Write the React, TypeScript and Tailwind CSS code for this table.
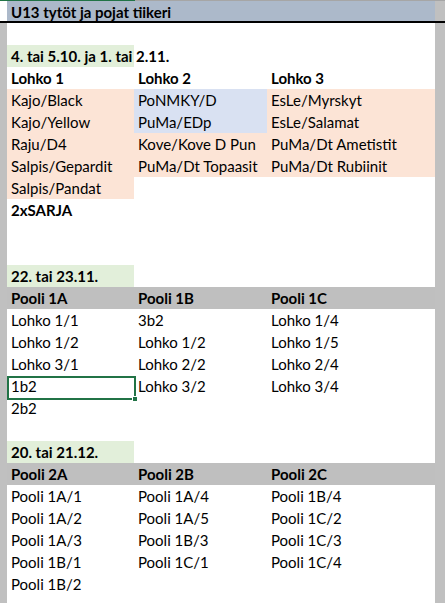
import React from "react"

type Cell = { text?: string; bold?: boolean; bg?: string; selected?: boolean }

const peach = "bg-[#fce4d6]"
const blue = "bg-[#d9e1f2]"
const green = "bg-[#e2efda]"
const gray = "bg-[#bfbfbf]"

const colW = ["w-[127px]", "w-[133px]", "w-[168px]"]

function SheetRow({ cells, rowBg }: { cells: Cell[]; rowBg?: string }) {
  return (
    <div className={`flex h-[22px] ${rowBg ?? ""}`}>
      {[0, 1, 2].map((i) => {
        const c = cells[i] ?? {}
        return (
          <div
            key={i}
            className={`relative ${colW[i]} shrink-0 h-[22px] pl-[4px] leading-[22px] whitespace-nowrap ${c.bg ?? ""} ${
              c.bold ? "font-bold" : ""
            }`}
          >
            {c.selected && (
              <>
                <div className="absolute left-0 top-[1px] w-[129px] h-[24px] border-2 border-[#217346]" />
                <div className="absolute left-[125px] top-[21px] w-[6px] h-[6px] bg-[#217346] border border-white" />
              </>
            )}
            <span className="relative">{c.text}</span>
          </div>
        )
      })}
    </div>
  )
}

const t = (text: string, bg?: string): Cell => ({ text, bg })
const b = (text: string, bg?: string): Cell => ({ text, bg, bold: true })
const empty: Cell[] = []

export default function App() {
  return (
    <div
      className="w-[445px] h-[603px] overflow-hidden bg-[#c0c0c0] text-[15px] text-black"
      style={{ fontFamily: "Lato, 'Open Sans', sans-serif" }}
    >
      <div className="flex h-px">
        <div className="w-[135px] bg-[#217346]" />
        <div className="flex-1 bg-[#a6a6a6]" />
      </div>
      <div className="flex h-[20px]">
        <div className="w-[7px] bg-white" />
        <div className="w-[428px] bg-[#acb9ca] pl-[4px] font-bold leading-[22px]">U13 tytöt ja pojat tiikeri</div>
        <div className="flex-1 bg-[#c0c0c0]" />
      </div>
      <div className="h-[2px] bg-black" />
      <div className="flex">
        <div className="w-[7px] bg-[#c0c0c0]" />
        <div className="w-[428px] bg-white">
          <SheetRow cells={empty} />
          <SheetRow cells={[b("4. tai 5.10. ja 1. tai 2.11.", green)]} />
          <SheetRow cells={[b("Lohko 1"), b("Lohko 2"), b("Lohko 3")]} />
          <SheetRow cells={[t("Kajo/Black", peach), t("PoNMKY/D", blue), t("EsLe/Myrskyt", peach)]} />
          <SheetRow cells={[t("Kajo/Yellow", peach), t("PuMa/EDp", blue), t("EsLe/Salamat", peach)]} />
          <SheetRow cells={[t("Raju/D4", peach), t("Kove/Kove D Pun", peach), t("PuMa/Dt Ametistit", peach)]} />
          <SheetRow cells={[t("Salpis/Gepardit", peach), t("PuMa/Dt Topaasit", peach), t("PuMa/Dt Rubiinit", peach)]} />
          <SheetRow cells={[t("Salpis/Pandat", peach)]} />
          <SheetRow cells={[b("2xSARJA")]} />
          <SheetRow cells={empty} />
          <SheetRow cells={empty} />
          <SheetRow cells={[b("22. tai 23.11.", green)]} />
          <SheetRow rowBg={gray} cells={[b("Pooli 1A"), b("Pooli 1B"), b("Pooli 1C")]} />
          <SheetRow cells={[t("Lohko 1/1"), t("3b2"), t("Lohko 1/4")]} />
          <SheetRow cells={[t("Lohko 1/2"), t("Lohko 1/2"), t("Lohko 1/5")]} />
          <SheetRow cells={[t("Lohko 3/1"), t("Lohko 2/2"), t("Lohko 2/4")]} />
          <SheetRow cells={[{ text: "1b2", selected: true }, t("Lohko 3/2"), t("Lohko 3/4")]} />
          <SheetRow cells={[t("2b2")]} />
          <SheetRow cells={empty} />
          <SheetRow cells={[b("20. tai 21.12.", green)]} />
          <SheetRow rowBg={gray} cells={[b("Pooli 2A"), b("Pooli 2B"), b("Pooli 2C")]} />
          <SheetRow cells={[t("Pooli 1A/1"), t("Pooli 1A/4"), t("Pooli 1B/4")]} />
          <SheetRow cells={[t("Pooli 1A/2"), t("Pooli 1A/5"), t("Pooli 1C/2")]} />
          <SheetRow cells={[t("Pooli 1A/3"), t("Pooli 1B/3"), t("Pooli 1C/3")]} />
          <SheetRow cells={[t("Pooli 1B/1"), t("Pooli 1C/1"), t("Pooli 1C/4")]} />
          <SheetRow cells={[t("Pooli 1B/2")]} />
          <SheetRow cells={empty} />
        </div>
        <div className="flex-1 bg-[#c0c0c0]" />
      </div>
    </div>
  )
}
